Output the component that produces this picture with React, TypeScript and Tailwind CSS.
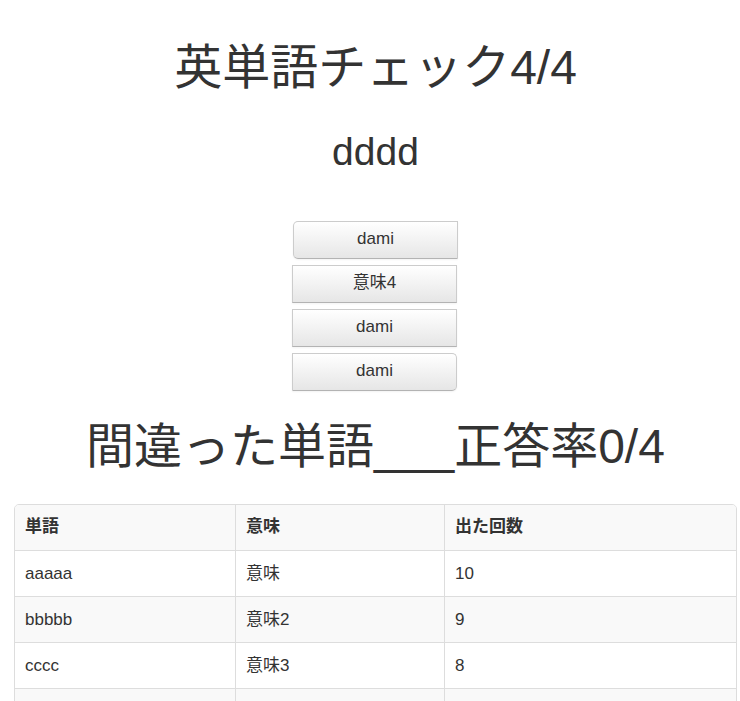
const choices = ["dami", "意味4", "dami", "dami"];
const rows = [
  ["aaaaa", "意味", "10"],
  ["bbbbb", "意味2", "9"],
  ["cccc", "意味3", "8"],
  ["dddd", "意味4", "7"],
];

const corners = ["ml-[2px] rounded-l-[5px]", "", "", "rounded-r-[5px]"];

export default function App() {
  return (
    <main className="bg-white pl-[14px] pr-[3px] font-['Liberation_Sans','Noto_Sans_CJK_JP',sans-serif] text-[17px] leading-5 text-[#333]">
      <header className="text-center">
        <h1 className="pt-8 text-[48px] leading-[72px]">英単語チェック4/4</h1>
        <h2 className="pt-6 text-[39px] leading-[48px]">dddd</h2>
      </header>
      <div className="mt-[45px] flex flex-col items-center gap-[6px] pr-[2px]">
        {choices.map((choice, i) => (
          <button
            key={i}
            type="button"
            className={`h-[38px] w-[165px] border border-[#ccc] border-b-[#b3b3b3] bg-linear-to-b from-white to-[#e6e6e6] pb-[2px] shadow-xs ${corners[i]}`}
          >
            {choice}
          </button>
        ))}
      </div>
      <h1 className="pt-5 text-center text-[48px] leading-[72px]">間違った単語___正答率0/4</h1>
      <div className="mt-[21px] overflow-hidden rounded-t-[5px] border border-[#ddd]">
        <table className="w-full table-fixed border-separate border-spacing-0 text-left">
          <colgroup>
            <col className="w-[220px]" />
            <col className="w-[209px]" />
            <col />
          </colgroup>
          <thead>
            <tr className="h-[45px] bg-[#f9f9f9]">
              {["単語", "意味", "出た回数"].map((label) => (
                <th key={label} scope="col" className="border-l border-[#ddd] px-[10px] pb-[2px] first:border-l-0">{label}</th>
              ))}
            </tr>
          </thead>
          <tbody>
            {rows.map((row) => (
              <tr key={row[0]} className="h-[46px] even:bg-[#f9f9f9]">
                {row.map((cell) => (
                  <td key={cell} className="border-t border-l border-[#ddd] px-[10px] first:border-l-0">{cell}</td>
                ))}
              </tr>
            ))}
          </tbody>
        </table>
      </div>
    </main>
  );
}
